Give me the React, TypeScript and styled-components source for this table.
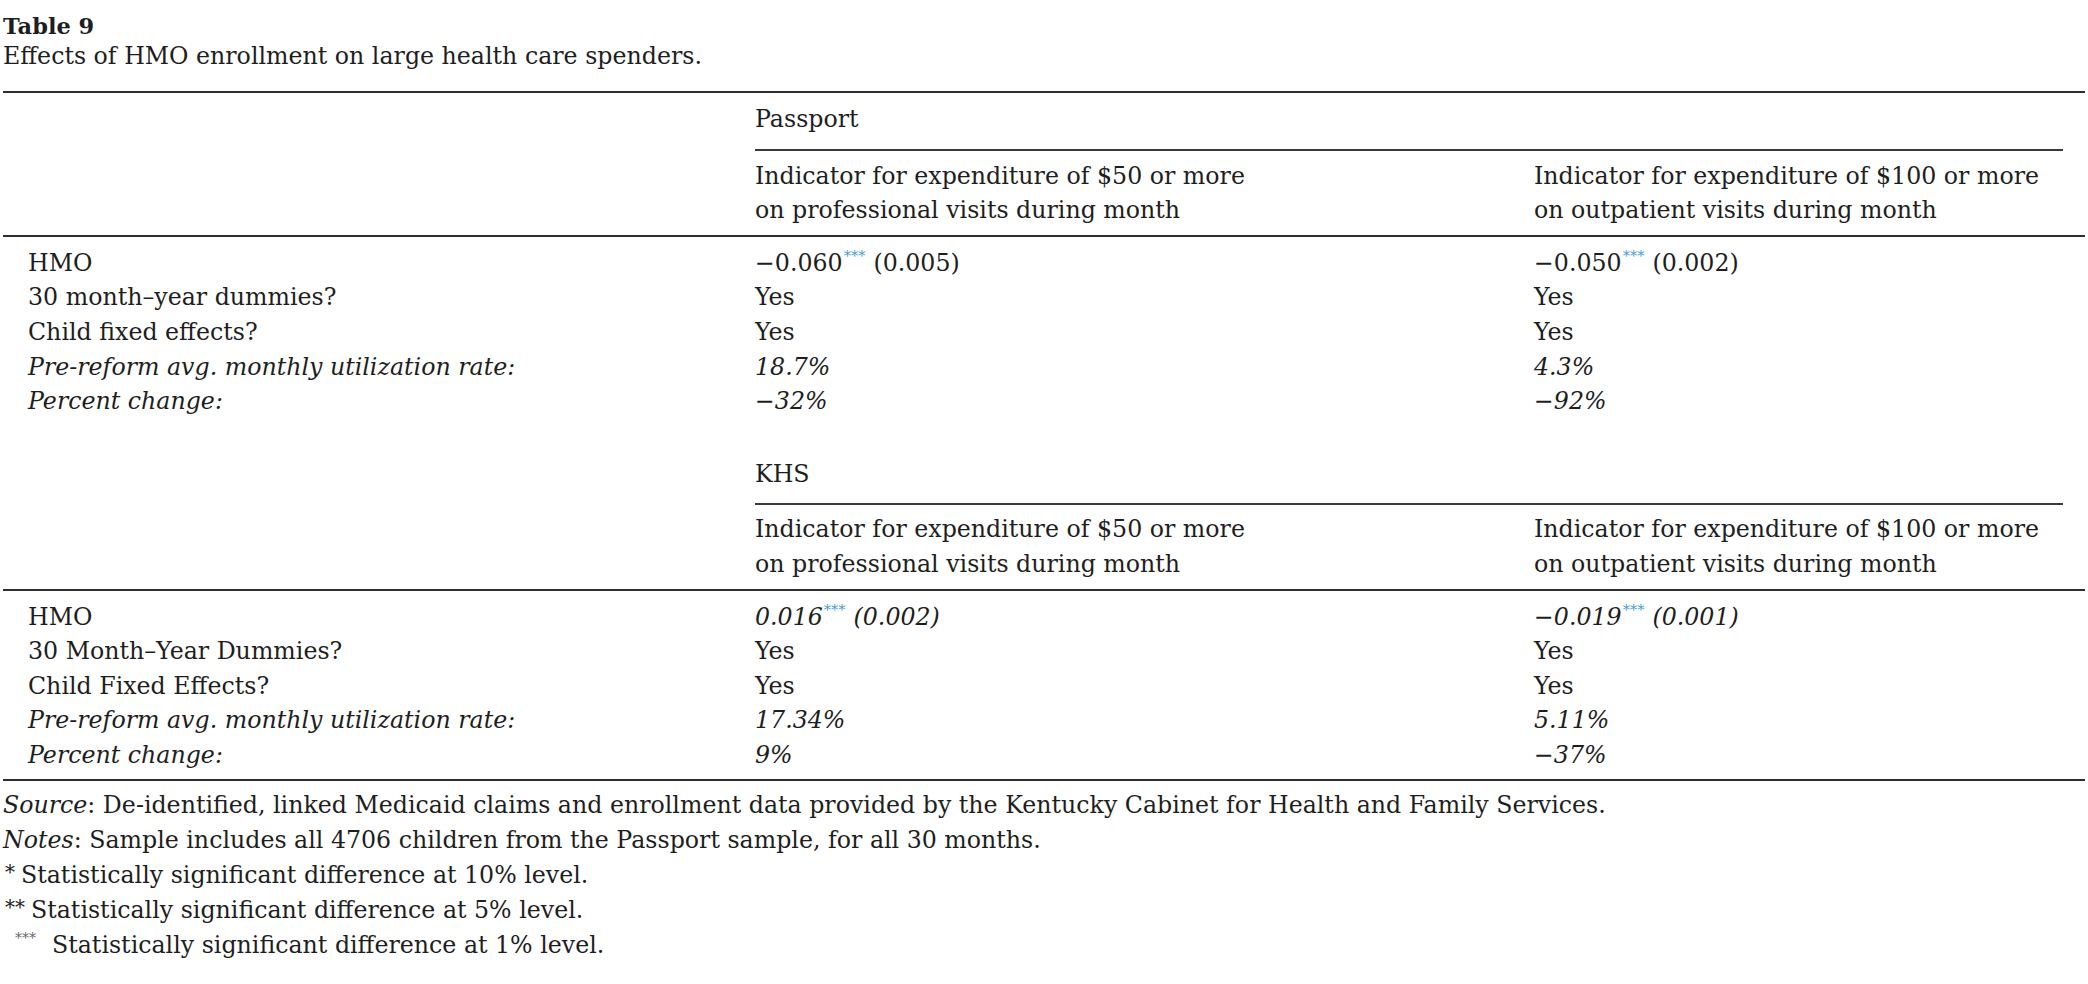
import React from "react";
import styled, { createGlobalStyle } from "styled-components";

const GlobalStyle = createGlobalStyle`
  html, body {
    margin: 0;
    padding: 0;
    background: #ffffff;
  }
  body {
    font-family: "DejaVu Serif", "Liberation Serif", serif;
    color: #1e1e1e;
  }
`;

type Row = {
  label: string;
  values: [React.ReactNode, React.ReactNode];
  italic?: boolean;
  valueItalic?: boolean;
};

type Section = {
  name: string;
  heads: [string[], string[]];
  rows: Row[];
};

const Page = styled.div`
  padding: 11px 3px 0;
  font-size: 23.7px;
`;

const Caption = styled.div`
  line-height: 30px;
`;

const Title = styled.div`
  font-weight: 700;
  font-size: 22.5px;
`;

const Subtitle = styled.div`
  font-size: 23.7px;
`;

const Table = styled.div`
  margin-top: 20px;
  border-top: 2px solid #2e2e2e;
  border-bottom: 2px solid #2e2e2e;
  line-height: 34.6px;
`;

const Grid = styled.div<{ $pt?: number; $pb?: number; $rule?: boolean }>`
  display: grid;
  grid-template-columns: 752px 779px 1fr;
  padding-top: ${(p) => p.$pt ?? 0}px;
  padding-bottom: ${(p) => p.$pb ?? 0}px;
  border-bottom: ${(p) => (p.$rule ? "2px solid #2e2e2e" : "none")};
`;

const GroupCell = styled.div`
  grid-column: 2 / 4;
  margin-right: 22px;
  padding-bottom: 12px;
  border-bottom: 2px solid #3a3a3a;
`;

const HeadCell = styled.div`
  white-space: nowrap;
`;

const Line = styled.span`
  display: block;
`;

const Label = styled.div<{ $italic?: boolean }>`
  padding-left: 25px;
  font-style: ${(p) => (p.$italic ? "italic" : "normal")};
  white-space: nowrap;
`;

const Value = styled.div<{ $italic?: boolean }>`
  font-style: ${(p) => (p.$italic ? "italic" : "normal")};
  white-space: nowrap;
`;

const Stars = styled.sup`
  font-size: 14.5px;
  line-height: 0;
  color: #3f9fd4;
  font-style: normal;
  vertical-align: 10px;
  margin: 0 8px 0 1px;
`;

const Notes = styled.div`
  padding-top: 7px;
  line-height: 35px;
`;

const Note = styled.div`
  white-space: nowrap;
`;

const Em = styled.span`
  font-style: italic;
`;

const NoteMark = styled.span<{ $gray?: boolean }>`
  font-size: ${(p) => (p.$gray ? "14px" : "20px")};
  color: ${(p) => (p.$gray ? "#6a6a6a" : "inherit")};
  vertical-align: ${(p) => (p.$gray ? "10px" : "4px")};
  line-height: 0;
  margin: ${(p) => (p.$gray ? "0 16px 0 12px" : "0 6px 0 2px")};
`;

const Coef = ({ value, se }: { value: string; se: string }) => (
  <>
    {value}
    <Stars>***</Stars>
    {se}
  </>
);

const heads: [string[], string[]] = [
  ["Indicator for expenditure of $50 or more", "on professional visits during month"],
  ["Indicator for expenditure of $100 or more", "on outpatient visits during month"],
];

const sections: Section[] = [
  {
    name: "Passport",
    heads,
    rows: [
      {
        label: "HMO",
        values: [<Coef value="−0.060" se="(0.005)" />, <Coef value="−0.050" se="(0.002)" />],
      },
      { label: "30 month–year dummies?", values: ["Yes", "Yes"] },
      { label: "Child fixed effects?", values: ["Yes", "Yes"] },
      {
        label: "Pre-reform avg. monthly utilization rate:",
        values: ["18.7%", "4.3%"],
        italic: true,
        valueItalic: true,
      },
      { label: "Percent change:", values: ["−32%", "−92%"], italic: true, valueItalic: true },
    ],
  },
  {
    name: "KHS",
    heads,
    rows: [
      {
        label: "HMO",
        values: [<Coef value="0.016" se="(0.002)" />, <Coef value="−0.019" se="(0.001)" />],
        valueItalic: true,
      },
      { label: "30 Month–Year Dummies?", values: ["Yes", "Yes"] },
      { label: "Child Fixed Effects?", values: ["Yes", "Yes"] },
      {
        label: "Pre-reform avg. monthly utilization rate:",
        values: ["17.34%", "5.11%"],
        italic: true,
        valueItalic: true,
      },
      { label: "Percent change:", values: ["9%", "−37%"], italic: true, valueItalic: true },
    ],
  },
];

const SectionBlock = ({ section, first }: { section: Section; first: boolean }) => (
  <>
    <Grid $pt={first ? 9 : 38}>
      <GroupCell>{section.name}</GroupCell>
    </Grid>
    <Grid $pt={first ? 8 : 7} $pb={7} $rule>
      <div />
      {section.heads.map((h, i) => (
        <HeadCell key={i}>
          {h.map((l) => (
            <Line key={l}>{l}</Line>
          ))}
        </HeadCell>
      ))}
    </Grid>
    <Grid $pt={9} $pb={first ? 0 : 6}>
      {section.rows.map((r) => (
        <React.Fragment key={r.label}>
          <Label $italic={r.italic}>{r.label}</Label>
          <Value $italic={r.valueItalic}>{r.values[0]}</Value>
          <Value $italic={r.valueItalic}>{r.values[1]}</Value>
        </React.Fragment>
      ))}
    </Grid>
  </>
);

export default function App() {
  return (
    <Page>
      <GlobalStyle />
      <Caption>
        <Title>Table 9</Title>
        <Subtitle>Effects of HMO enrollment on large health care spenders.</Subtitle>
      </Caption>
      <Table>
        {sections.map((s, i) => (
          <SectionBlock key={s.name} section={s} first={i === 0} />
        ))}
      </Table>
      <Notes>
        <Note>
          <Em>Source</Em>: De-identified, linked Medicaid claims and enrollment data provided by the
          Kentucky Cabinet for Health and Family Services.
        </Note>
        <Note>
          <Em>Notes</Em>: Sample includes all 4706 children from the Passport sample, for all 30
          months.
        </Note>
        <Note>
          <NoteMark>*</NoteMark>Statistically significant difference at 10% level.
        </Note>
        <Note>
          <NoteMark>**</NoteMark>Statistically significant difference at 5% level.
        </Note>
        <Note>
          <NoteMark $gray>***</NoteMark>Statistically significant difference at 1% level.
        </Note>
      </Notes>
    </Page>
  );
}
